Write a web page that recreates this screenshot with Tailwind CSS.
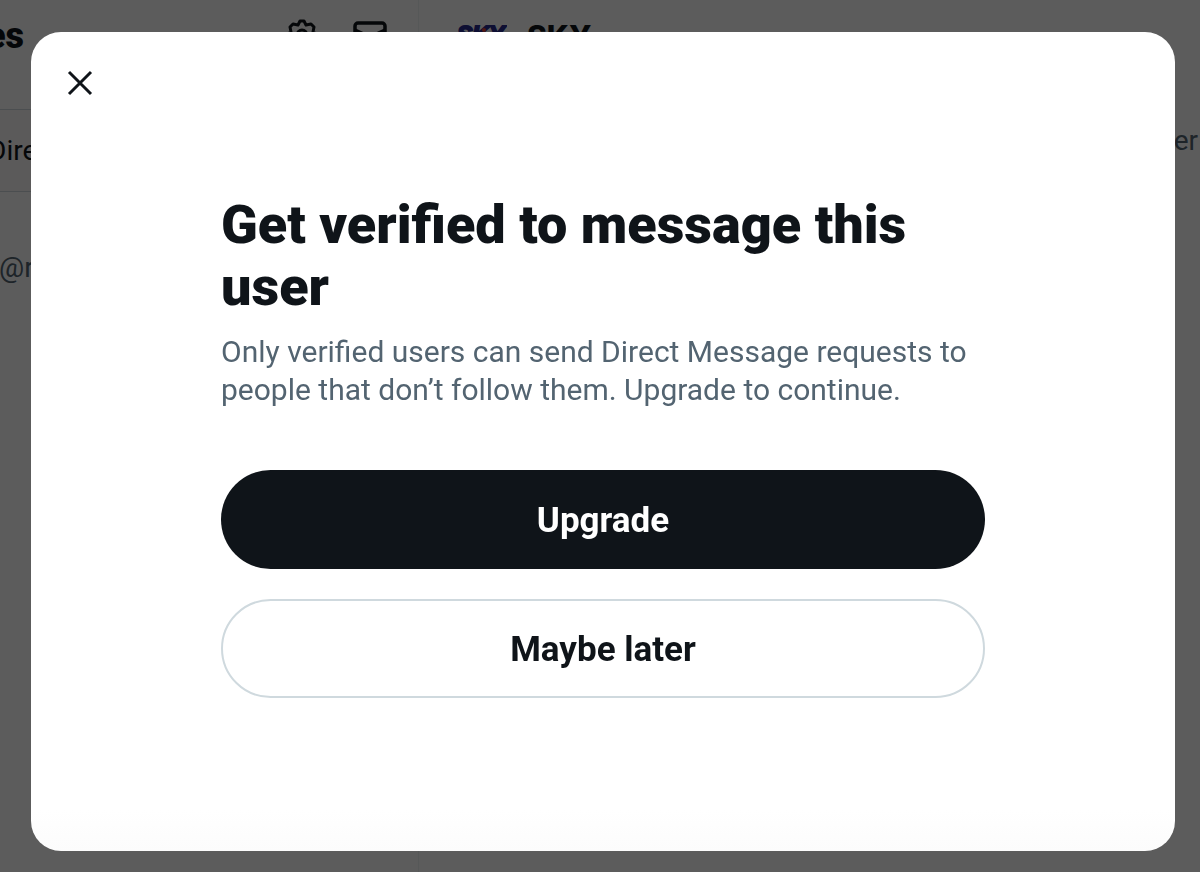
<!DOCTYPE html>
<html lang="en">
<head>
<meta charset="utf-8">
<meta name="viewport" content="width=device-width, initial-scale=1">
<title>Messages</title>
<script src="https://cdn.jsdelivr.net/npm/@tailwindcss/browser@4"></script>
</head>
<body class="h-screen overflow-hidden bg-white font-['Roboto','Noto_Sans',sans-serif] text-[#0f1419]">

<div class="flex h-full" aria-hidden="true">
  <section class="w-[419px] shrink-0 border-r border-[#eff3f4]">
    <header class="flex h-[109px] items-start pt-4">
      <div class="flex w-6 justify-end text-4xl font-black">Messages</div>
      <div class="ml-auto flex gap-8 pr-[30px]">
        <svg class="size-9" viewBox="0 0 36 36" fill="none" stroke="currentColor" stroke-width="3" stroke-linejoin="round">
          <path d="M16 5h4l2 4 5-1 3 3-1 5 4 2v4l-4 2 1 5-3 3-5-1-2 4h-4l-2-4-5 1-3-3 1-5-4-2v-4l4-2-1-5 3-3 5 1z"/>
          <circle cx="18" cy="19" r="5"/>
        </svg>
        <svg class="size-9" viewBox="0 0 36 36" fill="none" stroke="currentColor" stroke-width="3.5" stroke-linejoin="round">
          <rect x="3" y="7" width="30" height="25" rx="3"/>
          <path d="M3 14l15 7 15-7"/>
        </svg>
      </div>
    </header>
    <div class="-ml-3 flex h-[83px] items-center border-y border-[#cfd9de] bg-[#fcf9f9] text-[28px]">Direct</div>
    <div class="-ml-px pt-14 text-[28px] leading-10 text-[#536471]">@r</div>
  </section>
  <section class="min-w-0 grow">
    <header class="flex h-[109px] items-start gap-5 pt-4 pl-[38px]">
      <svg class="h-9 w-[50px]" viewBox="0 0 50 36">
        <text x="0" y="27" font-family="Liberation Sans" font-size="23" font-weight="700" font-style="italic" fill="#272a8f" stroke="#272a8f" stroke-width="2">SKY</text>
        <circle cx="27" cy="14" r="2" fill="#e0402f"/>
      </svg>
      <div class="font-['Inter'] text-[30px] leading-10 font-extrabold">SKY</div>
    </header>
    <div class="flex justify-end pt-3 pr-0.5 text-[28px] leading-10 text-[#536471]">er</div>
  </section>
</div>

<div class="fixed inset-0 flex bg-black/64 pt-8 pr-[25px] pb-[21px] pl-[31px]">
  <div role="dialog" aria-modal="true" aria-labelledby="title" class="flex grow flex-col rounded-[30px] bg-linear-to-b from-white from-95% to-[#fcfcfc]">
    <div class="flex h-[102px] items-center pl-8">
      <button type="button" aria-label="Close" class="p-1">
        <svg class="size-[26px]" viewBox="0 0 26 26" fill="none" stroke="currentColor" stroke-width="3"><path d="M2 2l22 22M24 2L2 24"/></svg>
      </button>
    </div>
    <div class="flex flex-col px-[190px] pt-[60px]">
      <h1 id="title" class="text-[54px] leading-[62px] font-black">Get verified to message this user</h1>
      <p class="mt-[15px] text-[30px] leading-[38px] text-[#536471]">Only verified users can send Direct Message requests to people that don’t follow them. Upgrade to continue.</p>
      <button type="button" class="mt-[61px] h-[99px] rounded-full bg-[#0f1419] pt-1 text-[35px] font-bold text-white">Upgrade</button>
      <button type="button" class="mt-[30px] h-[99px] rounded-full border-2 border-[#cfd9de] pt-1 text-[35px] font-bold">Maybe later</button>
    </div>
  </div>
</div>
</body>
</html>
